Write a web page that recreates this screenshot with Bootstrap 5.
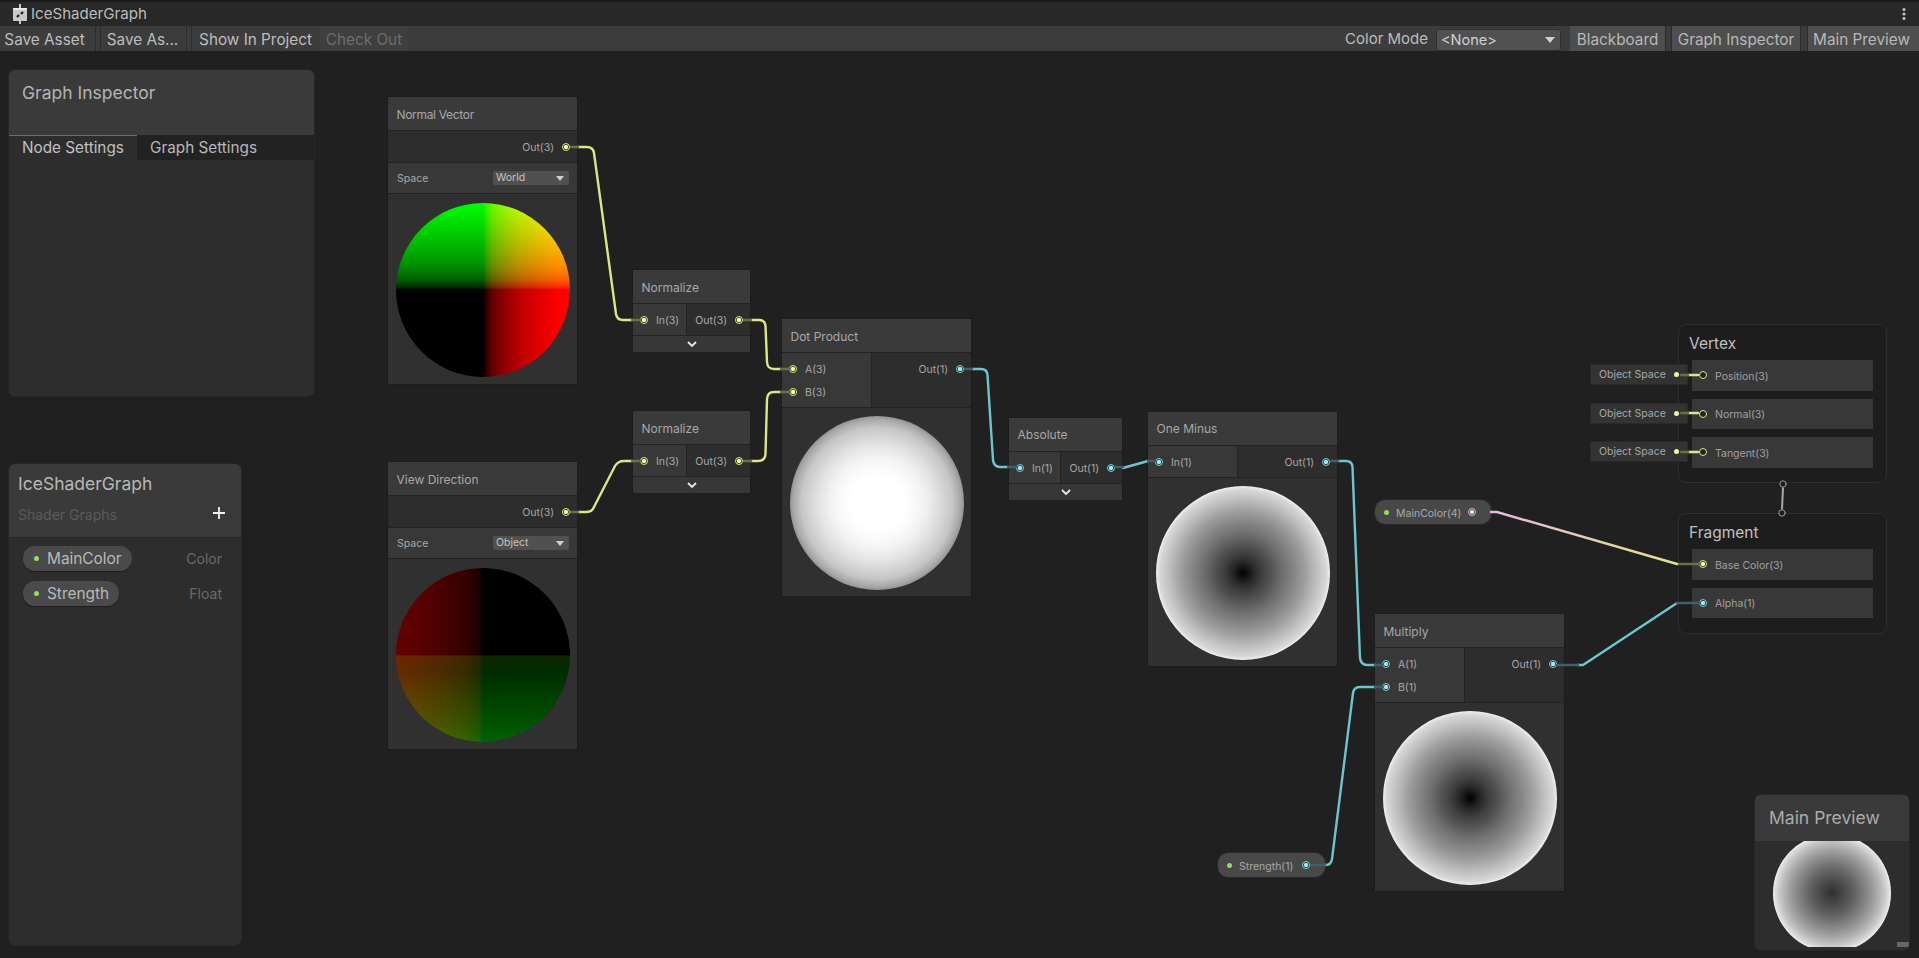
<!DOCTYPE html>
<html lang="en">
<head>
<meta charset="utf-8">
<title>IceShaderGraph</title>
<link href="https://cdn.jsdelivr.net/npm/bootstrap@5.3.0/dist/css/bootstrap.min.css" rel="stylesheet">
<style>
html,body{height:100%;}
body{background:#202020;color:#b4b4b4;font-family:Inter,"Liberation Sans",sans-serif;font-size:12px;}
.titlebar{height:26px;padding-top:2px;background:linear-gradient(#191919 2px,#282828 2px);padding-left:13px;}
.titlebar .tname{font-size:15.1px;color:#bcbcbc;margin-left:4px;}
.tbar{height:25px;background:#3c3c3c;}
.tb-btn{height:25px;padding:1px 0 0;border:0;border-radius:0;background:#3c3c3c;color:#bcbcbc;font-size:15.3px;line-height:23px;text-align:center;}
.tb-btn.off{color:#6e6e6e;background:#3f3f3f;margin-left:2px;opacity:1;border:0;}
.tb-lit{background:#4e4e4e;color:#b8b8b8;}
.tb-sep{width:6px;border-left:1px solid #2c2c2c;border-right:1px solid #2c2c2c;margin:0 1px;background:#3c3c3c;}
.tb-sep2{width:8px;border-left:1px solid #2c2c2c;border-right:1px solid #2c2c2c;background:#3c3c3c;}
.tb-sep3{width:7px;}
.w-save{width:94px;padding-right:5px}.w-saveas{width:83px;padding-right:2px}.w-show{width:125px}.w-check{width:88px}
.w-black{width:95px}.w-insp{width:128px}.w-main{width:111px;padding-right:4px}
.cm-label{font-size:15px;color:#bcbcbc;margin-right:8px;padding-top:2px;}
.cm-select{width:125px;height:22px;margin-top:3px;margin-right:9px;background:#515151;border:1px solid #303030;border-radius:3px;color:#d0d0d0;font-size:14.5px;padding:0 5px 0 4px;line-height:18px;}
.tri{width:0;height:0;border-left:5px solid transparent;border-right:5px solid transparent;border-top:6px solid #d0d0d0;}
.kebab{margin-right:13px;margin-left:auto;}
.gcanvas{height:907px;background:#202020;}
.wires{position:absolute;left:0;top:0;z-index:3;pointer-events:none;}
.gnode{position:absolute;background:#303030;box-shadow:0 0 0 1px #1c1c1c;}
.ntitle{height:34px;padding:2px 0 0 8.5px;background:#3a3a3a;border-bottom:1px solid #232323;color:#a8a8a8;font-size:12px;}
.ntitle.t1{padding-top:0;}
.tight{letter-spacing:-.32px;}
.nports{background:#2d2d2d;border-bottom:1px solid #232323;}
.cell-in{background:#383838;border-right:1px solid #232323;padding:4px 0;}
.cell-out{background:#2d2d2d;padding:4px 0;}
.prow{height:23px;gap:8px;color:#a8a8a8;font-size:10.5px;}
.prow.pin{padding-left:7px;}
.prow.pout{padding-right:7px;justify-content:flex-end;}
.plabel{padding-top:3px;}
.port{flex:none;width:6px;height:6px;border-radius:50%;box-sizing:content-box;}
.py{border:1px solid #dfe585;background:radial-gradient(circle closest-side,#f6fa9e 0 62%,#333 80%);}
.pc{border:1px solid #6fd1dc;background:radial-gradient(circle closest-side,#a2eaf2 0 62%,#333 80%);}
.pp{border:1px solid #e8b8e8;background:radial-gradient(circle closest-side,#f5cff5 0 62%,#444 80%);}
.po{border:1px solid #dfe585;background:#222;}
.chev{height:16px;background:#373737;}
.sp-row{height:31px;background:#383838;border-bottom:1px solid #232323;padding:0 8px 0 9px;font-size:10.5px;color:#a8a8a8;}
.sp-row>span:first-child{padding-top:2px;}
.sp-sel{width:76px;height:14px;background:#505050;border-radius:2px;padding:0 3px;color:#c4c4c4;font-size:10.5px;line-height:14px;}
.sp-sel .tri{border-left-width:4px;border-right-width:4px;border-top-width:5px;margin-right:2px;}
.pvw{padding-top:9px;}
.pvw2{padding-top:8px;}
.ball{border-radius:50%;}
.b87{width:174px;height:174px;}
.b-normal{background-image:linear-gradient(to right,#000 50%,#300000 52%,#6a0000 56%,#900000 62%,#c00000 72%,#e80000 85%,#f00 95%),linear-gradient(to top,#000 50%,#003000 52%,#006000 56%,#008a00 63%,#00ac00 72%,#00d400 85%,#0f0 100%);background-blend-mode:screen;}
.b-view{background-image:linear-gradient(to left,#000 50%,#1c0000 52%,#350000 60%,#480000 72%,#5c0000 88%,#640000 100%),linear-gradient(to bottom,#000 50%,#0c2600 50.5%,#002c00 60%,#003c00 72%,#005000 88%,#006400 100%);background-blend-mode:screen;}
.b-dot{background:radial-gradient(circle closest-side,#fff 0 30%,#fafafa 42%,#f2f2f2 54%,#e2e2e2 68%,#c6c6c6 87%,#a8a8a8 96%,#949494 100%);}
.b-one{background:radial-gradient(circle closest-side,#000 0,#262626 12%,#3f3f3f 22%,#525252 32%,#6e6e6e 45%,#858585 58%,#a0a0a0 72%,#bdbdbd 84%,#d8d8d8 96%,#f0f0f0 100%);}
.node-nv{left:388px;top:46px;width:189px;height:287px}
.node-vd{left:388px;top:411px;width:189px;height:287px}
.node-n1{left:633px;top:219px;width:117px;height:81px}
.node-n2{left:633px;top:360px;width:117px;height:81px}
.node-dp{left:782px;top:268px;width:189px;height:277px}
.node-ab{left:1009px;top:367px;width:113px;height:80px}
.node-om{left:1148px;top:361px;width:189px;height:254px}
.node-mu{left:1375px;top:563px;width:189px;height:277px}
.w54{width:54px}.w90{width:90px}.w52{width:52px}
.gpill{position:absolute;height:24px;border-radius:10px;background:#484848;color:#a8a8a8;font-size:10.5px;padding:0 0 0 9px;box-shadow:0 0 0 1px #282828;z-index:2;}
.gdot{width:5px;height:5px;border-radius:50%;background:#8ce05a;margin-right:7px;flex:none;}
.pl-main{left:1375px;top:449px;width:116px}
.pl-str{left:1218px;top:802px;width:107px}
.pl-main .port,.pl-str .port{margin-left:auto;}
.pl-main .port{margin-right:15px}.pl-str .port{margin-right:15px}
.mstack{position:absolute;background:#1d1d1d;border:1px solid #2e2e2e;border-radius:8px;}
.ms-v{left:1678px;top:273px;width:209px;height:159px}
.ms-f{left:1678px;top:462px;width:209px;height:121px}
.mtitle{height:35px;padding:3px 0 0 10px;font-size:15.5px;color:#c0c0c0;}
.slot{height:30.5px;margin:0 13px 8px 13px;background:#383838;color:#a0a0a0;font-size:10.5px;padding-left:7px;gap:8px;}
.objb{position:absolute;left:1591px;width:96px;height:19px;background:#333;color:#a8a8a8;font-size:10.5px;padding-left:8px;box-shadow:0 0 0 1px #292929;z-index:2;}
.objb .ydot{width:5px;height:5px;border-radius:50%;background:#f2f6a0;margin-left:auto;margin-right:8px;}
.ob1{top:314px}.ob2{top:353px}.ob3{top:391px}
.fwin{position:absolute;z-index:4;border-radius:6px;background:#2d2d2d;box-shadow:0 0 0 1px #262626;overflow:hidden;}
.fhead{background:#3a3a3a;}
.win-gi{left:9px;top:19px;width:305px;height:326px}
.win-gi .fhead{height:65px;padding:10px 0 0 13px;font-size:17.5px;color:#b4b4b4;border-bottom:1px solid #3a3a3a;}
.win-tabs{height:25px;background:#222;font-size:15.3px;}
.tab-on{width:128px;background:#2d2d2d;border-top:1.5px solid #3a79bb;color:#c0c0c0;padding-left:13px;padding-top:1px;}
.tab-off{color:#b8b8b8;padding-left:13px;padding-top:2px;}
.win-bb{left:9px;top:413px;width:232px;height:481px}
.win-bb .fhead{height:74px;padding:8px 16px 0 9px;border-bottom:1px solid #242424;}
.bb-title{font-size:17.5px;color:#b8b8b8;line-height:23px;}
.bb-sub{font-size:14px;color:#5a5a5a;margin-top:9px;}
.bb-plus{margin-top:5px;}
.bb-rows{padding:8px 19px 0 14px;gap:10px;}
.bb-row{height:25px;}
.bb-pill{height:25px;padding:0 10px 0 11px;border-radius:12px;background:#4a4a4a;box-shadow:0 1px 1px #1f1f1f;color:#b8b8b8;font-size:15.4px;}
.bb-pill .gdot{margin-right:8px;}
.bb-type{font-size:14px;color:#6a6a6a;}
.win-mp{left:1755px;top:744px;width:154px;height:155px;position:absolute;}
.win-mp .fhead{height:46px;padding:10px 0 0 14px;font-size:17.5px;color:#ababab;}
.mp-body{height:106px;background:#2d2d2d;overflow:hidden;position:relative;}
.mp-ball{width:118px;height:118px;border-radius:50%;position:absolute;left:18px;top:-7px;background:radial-gradient(circle closest-side,#303030 0,#3c3c3c 10%,#4c4c4c 22%,#626262 38%,#808080 55%,#a0a0a0 72%,#c2c2c2 87%,#e0e0e0 97%,#f4f4f4 100%);}
.mp-grip{position:absolute;right:0;bottom:0;width:12px;height:5px;background:#666;z-index:2;}
</style>
</head>
<body class="overflow-hidden">
<div class="titlebar d-flex align-items-center">
  <svg width="14" height="20" viewBox="0 0 14 20"><rect x="6" y="0" width="2" height="4" fill="#c8c8c8"/><rect x="0" y="4" width="14" height="13" rx="1" fill="#c8c8c8"/><rect x="0" y="4" width="14" height="2" fill="#e8e8e8"/><rect x="6" y="17" width="2" height="3" fill="#c8c8c8"/><path d="M4 13l2-2M8 10l2-2" stroke="#222" stroke-width="2.400"/></svg>
  <span class="tname">IceShaderGraph</span>
  <svg class="kebab" width="4" height="12" viewBox="0 0 4 12"><circle cx="2" cy="1.500" r="1.500" fill="#c8c8c8"/><circle cx="2" cy="6" r="1.500" fill="#c8c8c8"/><circle cx="2" cy="10.500" r="1.500" fill="#c8c8c8"/></svg>
</div>
<div class="tbar d-flex">
  <button class="btn tb-btn w-save">Save Asset</button><div class="tb-sep"></div>
  <button class="btn tb-btn w-saveas">Save As...</button><div class="tb-sep"></div>
  <button class="btn tb-btn w-show">Show In Project</button>
  <button class="btn tb-btn off w-check" disabled>Check Out</button>
  <div class="ms-auto d-flex">
    <div class="cm-label d-flex align-items-center">Color Mode</div>
    <div class="cm-select d-flex align-items-center justify-content-between"><span>&lt;None&gt;</span><span class="tri"></span></div>
    <button class="btn tb-btn tb-lit w-black">Blackboard</button><div class="tb-sep2 tb-sep3"></div>
    <button class="btn tb-btn tb-lit w-insp">Graph Inspector</button><div class="tb-sep2"></div>
    <button class="btn tb-btn tb-lit w-main">Main Preview</button>
  </div>
</div>

<div class="gcanvas position-relative">
  <svg class="wires" width="1919" height="907" viewBox="0 51 1919 907" fill="none" stroke-width="2.400" stroke-linecap="round">
    <defs><linearGradient id="pk" gradientUnits="userSpaceOnUse" x1="1491" y1="512" x2="1677" y2="564"><stop offset="0" stop-color="#eab8e2"/><stop offset="1" stop-color="#dfe585"/></linearGradient></defs>
    <g stroke="#dfe585">
      <path d="M578 147H587Q593 147 594 153L616 314Q617 320 623 320H632"/>
      <path d="M578 512H587Q592 512 594 507L615 466Q618 461 624 461H632"/>
      <path d="M751 320H759Q765 320 765.500 326L767 362Q767.500 369 774 369H781"/>
      <path d="M751 461H758Q765 461 765.500 454L767 399Q767.500 392 774 392H781"/>
      <path d="M1688 375H1698M1688 413H1698M1688 452H1698"/>
    </g>
    <g stroke="#6b6e47">
      <path d="M571 147H578M571 512H578M632 320H640M632 461H640M744 320H751M744 461H751M781 369H790M781 392H790M1681 375H1688M1681 413H1688M1681 452H1688M1677 564H1699"/>
    </g>
    <g stroke="#6cc6d0">
      <path d="M972 369H981Q987 369 987.500 375L993 460Q994 467 1000 467H1008"/>
      <path d="M1123 468L1148 461"/>
      <path d="M1338 461H1346Q1352 461 1352.500 467L1360 658Q1361 665 1367 665H1375"/>
      <path d="M1325 865H1326Q1331 865 1332 859L1353 693Q1354 687 1360 687H1375"/>
      <path d="M1578 665H1583L1677 603"/>
    </g>
    <g stroke="#3f6064">
      <path d="M965 369H972M1008 467H1016M1115 467H1123M1148 461H1155M1331 461H1338M1375 665H1383M1375 687H1383M1311 865H1325M1557 665H1578M1677 603H1699"/>
    </g>
    <path d="M1491 512H1497L1677 564" stroke="url(#pk)"/>
    <path d="M1783 488L1782 509" stroke="#a8a8a8" stroke-width="2"/>
    <circle cx="1783" cy="484" r="3.200" fill="#1d1d1d" stroke="#9a9a9a" stroke-width="1"/>
    <circle cx="1782" cy="513" r="3.200" fill="#1d1d1d" stroke="#9a9a9a" stroke-width="1"/>
  </svg>

  <!-- Normal Vector -->
  <div class="gnode node-nv">
    <div class="ntitle tight d-flex align-items-center">Normal Vector</div>
    <div class="nports cell-out"><div class="prow pout d-flex align-items-center"><span class="plabel">Out(3)</span><span class="port py"></span></div></div>
    <div class="sp-row d-flex align-items-center justify-content-between"><span>Space</span><span class="sp-sel d-flex align-items-center justify-content-between"><span>World</span><span class="tri"></span></span></div>
    <div class="d-flex justify-content-center pvw"><div class="ball b87 b-normal"></div></div>
  </div>
  <!-- View Direction -->
  <div class="gnode node-vd">
    <div class="ntitle d-flex align-items-center">View Direction</div>
    <div class="nports cell-out"><div class="prow pout d-flex align-items-center"><span class="plabel">Out(3)</span><span class="port py"></span></div></div>
    <div class="sp-row d-flex align-items-center justify-content-between"><span>Space</span><span class="sp-sel d-flex align-items-center justify-content-between"><span>Object</span><span class="tri"></span></span></div>
    <div class="d-flex justify-content-center pvw"><div class="ball b87 b-view"></div></div>
  </div>
  <!-- Normalize 1 -->
  <div class="gnode node-n1">
    <div class="ntitle d-flex align-items-center">Normalize</div>
    <div class="nports d-flex">
      <div class="cell-in w54"><div class="prow pin d-flex align-items-center"><span class="port py"></span><span class="plabel">In(3)</span></div></div>
      <div class="cell-out flex-grow-1"><div class="prow pout d-flex align-items-center"><span class="plabel">Out(3)</span><span class="port py"></span></div></div>
    </div>
    <div class="chev d-flex align-items-center justify-content-center"><svg width="10" height="7" viewBox="0 0 10 7"><path d="M1 1l4 4 4-4" fill="none" stroke="#e8e8e8" stroke-width="1.800"/></svg></div>
  </div>
  <!-- Normalize 2 -->
  <div class="gnode node-n2">
    <div class="ntitle d-flex align-items-center">Normalize</div>
    <div class="nports d-flex">
      <div class="cell-in w54"><div class="prow pin d-flex align-items-center"><span class="port py"></span><span class="plabel">In(3)</span></div></div>
      <div class="cell-out flex-grow-1"><div class="prow pout d-flex align-items-center"><span class="plabel">Out(3)</span><span class="port py"></span></div></div>
    </div>
    <div class="chev d-flex align-items-center justify-content-center"><svg width="10" height="7" viewBox="0 0 10 7"><path d="M1 1l4 4 4-4" fill="none" stroke="#e8e8e8" stroke-width="1.800"/></svg></div>
  </div>
  <!-- Dot Product -->
  <div class="gnode node-dp">
    <div class="ntitle d-flex align-items-center">Dot Product</div>
    <div class="nports d-flex">
      <div class="cell-in w90"><div class="prow pin d-flex align-items-center"><span class="port py"></span><span class="plabel">A(3)</span></div><div class="prow pin d-flex align-items-center"><span class="port py"></span><span class="plabel">B(3)</span></div></div>
      <div class="cell-out flex-grow-1"><div class="prow pout d-flex align-items-center"><span class="plabel">Out(1)</span><span class="port pc"></span></div></div>
    </div>
    <div class="d-flex justify-content-center pvw2"><div class="ball b87 b-dot"></div></div>
  </div>
  <!-- Absolute -->
  <div class="gnode node-ab">
    <div class="ntitle t1 d-flex align-items-center">Absolute</div>
    <div class="nports d-flex">
      <div class="cell-in w52"><div class="prow pin d-flex align-items-center"><span class="port pc"></span><span class="plabel">In(1)</span></div></div>
      <div class="cell-out flex-grow-1"><div class="prow pout d-flex align-items-center"><span class="plabel">Out(1)</span><span class="port pc"></span></div></div>
    </div>
    <div class="chev d-flex align-items-center justify-content-center"><svg width="10" height="7" viewBox="0 0 10 7"><path d="M1 1l4 4 4-4" fill="none" stroke="#e8e8e8" stroke-width="1.800"/></svg></div>
  </div>
  <!-- One Minus -->
  <div class="gnode node-om">
    <div class="ntitle t1 d-flex align-items-center">One Minus</div>
    <div class="nports d-flex">
      <div class="cell-in w90"><div class="prow pin d-flex align-items-center"><span class="port pc"></span><span class="plabel">In(1)</span></div></div>
      <div class="cell-out flex-grow-1"><div class="prow pout d-flex align-items-center"><span class="plabel">Out(1)</span><span class="port pc"></span></div></div>
    </div>
    <div class="d-flex justify-content-center pvw2"><div class="ball b87 b-one"></div></div>
  </div>
  <!-- Multiply -->
  <div class="gnode node-mu">
    <div class="ntitle d-flex align-items-center">Multiply</div>
    <div class="nports d-flex">
      <div class="cell-in w90"><div class="prow pin d-flex align-items-center"><span class="port pc"></span><span class="plabel">A(1)</span></div><div class="prow pin d-flex align-items-center"><span class="port pc"></span><span class="plabel">B(1)</span></div></div>
      <div class="cell-out flex-grow-1"><div class="prow pout d-flex align-items-center"><span class="plabel">Out(1)</span><span class="port pc"></span></div></div>
    </div>
    <div class="d-flex justify-content-center pvw2"><div class="ball b87 b-one"></div></div>
  </div>

  <div class="gpill pl-main d-flex align-items-center"><span class="gdot"></span><span class="plabel">MainColor(4)</span><span class="port pp"></span></div>
  <div class="gpill pl-str d-flex align-items-center"><span class="gdot"></span><span class="plabel">Strength(1)</span><span class="port pc"></span></div>

  <!-- Master stacks -->
  <div class="mstack ms-v">
    <div class="mtitle d-flex align-items-center">Vertex</div>
    <div class="slot d-flex align-items-center"><span class="port po"></span><span class="plabel">Position(3)</span></div>
    <div class="slot d-flex align-items-center"><span class="port po"></span><span class="plabel">Normal(3)</span></div>
    <div class="slot d-flex align-items-center"><span class="port po"></span><span class="plabel">Tangent(3)</span></div>
  </div>
  <div class="mstack ms-f">
    <div class="mtitle d-flex align-items-center">Fragment</div>
    <div class="slot d-flex align-items-center"><span class="port py"></span><span class="plabel">Base Color(3)</span></div>
    <div class="slot d-flex align-items-center"><span class="port pc"></span><span class="plabel">Alpha(1)</span></div>
  </div>
  <div class="objb ob1 d-flex align-items-center"><span>Object Space</span><span class="ydot"></span></div>
  <div class="objb ob2 d-flex align-items-center"><span>Object Space</span><span class="ydot"></span></div>
  <div class="objb ob3 d-flex align-items-center"><span>Object Space</span><span class="ydot"></span></div>

  <!-- Graph Inspector window -->
  <div class="fwin win-gi">
    <div class="fhead">Graph Inspector</div>
    <div class="win-tabs d-flex"><div class="tab-on">Node Settings</div><div class="tab-off">Graph Settings</div></div>
  </div>
  <!-- Blackboard window -->
  <div class="fwin win-bb">
    <div class="fhead">
      <div class="bb-title">IceShaderGraph</div>
      <div class="d-flex justify-content-between align-items-center">
        <div class="bb-sub">Shader Graphs</div>
        <svg class="bb-plus" width="12" height="12" viewBox="0 0 12 12"><path d="M6 0V12M0 6H12" stroke="#f0f0f0" stroke-width="1.800"/></svg>
      </div>
    </div>
    <div class="bb-rows d-flex flex-column">
      <div class="bb-row d-flex align-items-center justify-content-between"><div class="bb-pill d-flex align-items-center"><span class="gdot"></span>MainColor</div><span class="bb-type">Color</span></div>
      <div class="bb-row d-flex align-items-center justify-content-between"><div class="bb-pill d-flex align-items-center"><span class="gdot"></span>Strength</div><span class="bb-type">Float</span></div>
    </div>
  </div>
  <!-- Main Preview window -->
  <div class="fwin win-mp">
    <div class="fhead">Main Preview</div>
    <div class="mp-body"><div class="mp-ball"></div><div class="mp-grip"></div></div>
  </div>
</div>
<script src="https://cdn.jsdelivr.net/npm/bootstrap@5.3.0/dist/js/bootstrap.bundle.min.js"></script>
</body>
</html>
